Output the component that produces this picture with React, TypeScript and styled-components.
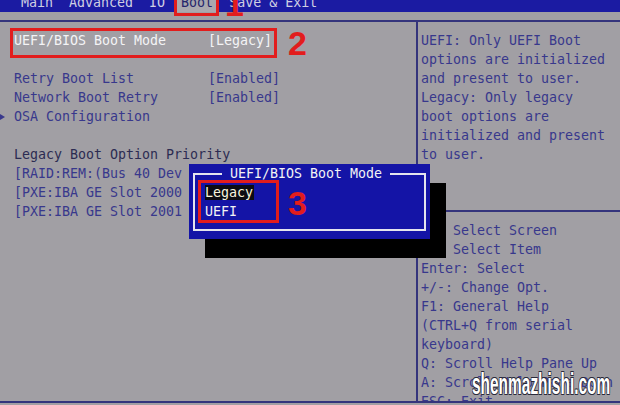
import React from 'react';
import styled, { createGlobalStyle } from 'styled-components';

// --- palette / metrics ---
const BG = '#a19fa4';
const INK = '#38388c';
const LINE = '#34347c';
const RED = '#e21d1d';
const MONO = `"DejaVu Sans Mono", "Liberation Mono", monospace`;

const GlobalStyle = createGlobalStyle`
  html, body {
    margin: 0;
    padding: 0;
    background: ${BG};
  }
  body {
    width: 620px;
    height: 405px;
    overflow: hidden;
  }
`;

// --- screen ---

const Screen = styled.div`
  position: relative;
  width: 620px;
  height: 405px;
  overflow: hidden;
  background: ${BG};
  font-family: ${MONO};
  font-size: 13.3px;
  line-height: 19px;
  color: ${INK};
`;

const MenuBar = styled.nav`
  height: 12px;
  overflow: hidden;
  background: #1b1ba2;
`;

const MenuRow = styled.div`
  display: flex;
  gap: 8px;
  margin-top: -7px;
  padding-left: 17px;
`;

const MenuItem = styled.span<{ $active?: boolean }>`
  padding: 0 4px;
  white-space: pre;
  color: ${(p) => (p.$active ? '#25256c' : '#cfcfe3')};
  background: ${(p) => (p.$active ? '#aaa8ae' : 'transparent')};
`;

const Frame = styled.div`
  display: flex;
  box-sizing: border-box;
  height: 383px;
  margin-top: 8px;
  border-top: 2px solid ${LINE};
  border-bottom: 2px solid ${LINE};
  overflow: hidden;
`;

const SettingsPane = styled.section`
  flex: none;
  width: 416px;
  padding-top: 9px;
  overflow: hidden;
`;

const SettingRow = styled.div<{ $selected?: boolean; $heading?: boolean }>`
  display: grid;
  grid-template-columns: 14px 194px 1fr;
  align-items: center;
  height: 19px;
  white-space: pre;
  color: ${(p) => (p.$selected ? '#f4f4f6' : p.$heading ? '#2c2c52' : INK)};
`;

const Gutter = styled.span`
  display: flex;
  align-items: center;
  height: 19px;
`;

const SubmenuArrow = styled.span`
  width: 0;
  height: 0;
  border-top: 3.5px solid transparent;
  border-bottom: 3.5px solid transparent;
  border-left: 5px solid ${INK};
`;

const HelpPane = styled.aside`
  flex: 1;
  border-left: 2px solid ${LINE};
  padding: 9px 0 0 3px;
  white-space: pre;
`;

const HelpText = styled.div`
  height: 171px;
`;

const HelpDivider = styled.div`
  position: relative;
  height: 19px;
  margin-left: -3px;

  &::after {
    content: '';
    position: absolute;
    left: 0;
    right: 0;
    top: 8px;
    height: 2px;
    background: ${LINE};
  }
`;

const KeyLine = styled.div<{ $indent?: boolean }>`
  height: 19px;
  padding-left: ${(p) => (p.$indent ? '32px' : '0')};
`;

// --- popup ---

const Popup = styled.div`
  position: absolute;
  left: 189px;
  top: 164px;
  width: 241px;
  box-sizing: border-box;
  padding: 0 4px 8px;
  background: #1414a6;
  box-shadow: 16px 19px 0 #000;
  color: #f2f2f4;
`;

const PopupFrame = styled.fieldset`
  margin: 0;
  min-width: 0;
  border: 2px solid #e4e4ee;
  padding: 0 0 8px 10px;
`;

const PopupTitle = styled.legend`
  margin: 0 0 0 17px;
  padding: 0 8px;
  line-height: 19px;
  white-space: pre;
`;

const PopupOption = styled.div`
  height: 19px;
`;

const Highlight = styled.span`
  background: #0c0c12;
  color: #f8f4de;
  padding: 0 1px 0 0;
`;

// --- annotations laid over the screenshot ---

const MarkBox = styled.div<{ $x: number; $y: number; $w: number; $h: number }>`
  position: absolute;
  left: ${(p) => p.$x}px;
  top: ${(p) => p.$y}px;
  width: ${(p) => p.$w}px;
  height: ${(p) => p.$h}px;
  box-sizing: border-box;
  border: 3px solid ${RED};
`;

const MarkNumber = styled.span<{ $x: number; $y: number }>`
  position: absolute;
  left: ${(p) => p.$x}px;
  top: ${(p) => p.$y}px;
  font-family: "Liberation Sans", Arial, sans-serif;
  font-weight: bold;
  font-size: 34px;
  line-height: 34px;
  color: ${RED};
`;

const Watermark = styled.span`
  position: absolute;
  left: 472px;
  top: 369px;
  font-family: "Liberation Sans", Arial, sans-serif;
  font-weight: bold;
  font-size: 30px;
  line-height: 30px;
  white-space: pre;
  color: #ffffff;
  transform: scaleX(0.515);
  transform-origin: left top;
  text-shadow: 1px 1px 0 #2a2a3a, -1px -1px 0 #2a2a3a, 1px -1px 0 #2a2a3a, -1px 1px 0 #2a2a3a;
`;

const helpLines = [
  'UEFI: Only UEFI Boot',
  'options are initialized',
  'and present to user.',
  'Legacy: Only legacy',
  'boot options are',
  'initialized and present',
  'to user.',
];

const keyLines: { text: string; indent?: boolean }[] = [
  { text: 'Select Screen', indent: true },
  { text: 'Select Item', indent: true },
  { text: 'Enter: Select' },
  { text: '+/-: Change Opt.' },
  { text: 'F1: General Help' },
  { text: '(CTRL+Q from serial' },
  { text: 'keyboard)' },
  { text: 'Q: Scroll Help Pane Up' },
  { text: 'A: Scroll Help Pane Down' },
  { text: 'ESC: Exit' },
];

export default function App() {
  return (
    <>
      <GlobalStyle />
      <Screen>
        <MenuBar>
          <MenuRow>
            <MenuItem>Main</MenuItem>
            <MenuItem>Advanced</MenuItem>
            <MenuItem>IO</MenuItem>
            <MenuItem $active>Boot</MenuItem>
            <MenuItem>Save &amp; Exit</MenuItem>
          </MenuRow>
        </MenuBar>

        <Frame>
          <SettingsPane>
            <SettingRow $selected>
              <Gutter />
              <span>UEFI/BIOS Boot Mode</span>
              <span>[Legacy]</span>
            </SettingRow>
            <SettingRow />
            <SettingRow>
              <Gutter />
              <span>Retry Boot List</span>
              <span>[Enabled]</span>
            </SettingRow>
            <SettingRow>
              <Gutter />
              <span>Network Boot Retry</span>
              <span>[Enabled]</span>
            </SettingRow>
            <SettingRow>
              <Gutter>
                <SubmenuArrow />
              </Gutter>
              <span>OSA Configuration</span>
            </SettingRow>
            <SettingRow />
            <SettingRow $heading>
              <Gutter />
              <span>Legacy Boot Option Priority</span>
            </SettingRow>
            <SettingRow>
              <Gutter />
              <span>[RAID:REM:(Bus 40 Dev</span>
            </SettingRow>
            <SettingRow>
              <Gutter />
              <span>[PXE:IBA GE Slot 2000</span>
            </SettingRow>
            <SettingRow>
              <Gutter />
              <span>[PXE:IBA GE Slot 2001</span>
            </SettingRow>
          </SettingsPane>

          <HelpPane>
            <HelpText>
              {helpLines.map((l) => (
                <div key={l}>{l}</div>
              ))}
            </HelpText>
            <HelpDivider />
            {keyLines.map((k) => (
              <KeyLine key={k.text} $indent={k.indent}>
                {k.text}
              </KeyLine>
            ))}
          </HelpPane>
        </Frame>

        <Popup>
          <PopupFrame>
            <PopupTitle>UEFI/BIOS Boot Mode</PopupTitle>
            <PopupOption>
              <Highlight>Legacy</Highlight>
            </PopupOption>
            <PopupOption>UEFI</PopupOption>
          </PopupFrame>
        </Popup>

        <MarkBox $x={174} $y={-8} $w={45} $h={24} />
        <MarkNumber $x={225} $y={-13}>1</MarkNumber>
        <MarkBox $x={10} $y={28} $w={267} $h={30} />
        <MarkNumber $x={288} $y={26}>2</MarkNumber>
        <MarkBox $x={198} $y={180} $w={81} $h={43} />
        <MarkNumber $x={288} $y={186}>3</MarkNumber>

        <Watermark>shenmazhishi.com</Watermark>
      </Screen>
    </>
  );
}
